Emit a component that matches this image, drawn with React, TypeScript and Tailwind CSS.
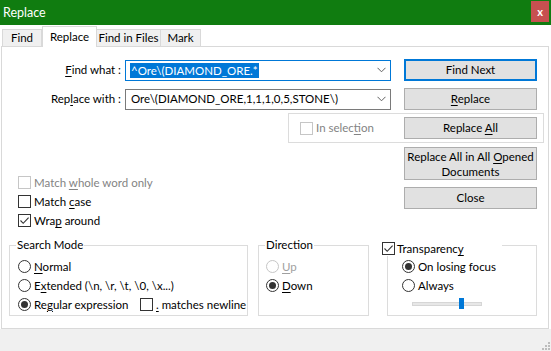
import type { ReactNode } from "react";

function U({ children }: { children: ReactNode }) {
  return <span className="underline decoration-1 underline-offset-[2px]">{children}</span>;
}

function Check({ checked = false, disabled = false }: { checked?: boolean; disabled?: boolean }) {
  return (
    <span
      className={`flex h-[13px] w-[13px] shrink-0 items-center justify-center border bg-white ${
        disabled ? "border-[#c6c6c6]" : "border-[#333333]"
      }`}
    >
      {checked && (
        <svg width="11" height="11" viewBox="0 0 11 11" aria-hidden="true">
          <path d="M1.5 5.5 4.2 8.3 9.6 2.6" fill="none" stroke="#333" strokeWidth="1.1" />
        </svg>
      )}
    </span>
  );
}

function Radio({ checked = false, disabled = false }: { checked?: boolean; disabled?: boolean }) {
  return (
    <span
      className={`flex h-[13px] w-[13px] shrink-0 items-center justify-center rounded-full border bg-white ${
        disabled ? "border-[#c6c6c6]" : "border-[#333333]"
      }`}
    >
      {checked && <span className="h-[7px] w-[7px] rounded-full bg-[#333333]" />}
    </span>
  );
}

function Chevron() {
  return (
    <svg width="9" height="6" viewBox="0 0 9 6" aria-hidden="true" className="ml-auto mr-[4px] shrink-0">
      <path d="M0.5 0.8 4.5 4.8 8.5 0.8" fill="none" stroke="#606060" strokeWidth="1" />
    </svg>
  );
}

function Button({ children, primary = false, className = "" }: { children: ReactNode; primary?: boolean; className?: string }) {
  return (
    <div
      className={`flex w-[133px] items-center justify-center bg-[#e1e1e1] text-center ${
        primary ? "border-2 border-[#0078d7]" : "border border-[#adadad]"
      } ${className}`}
    >
      {children}
    </div>
  );
}

function GroupBox({ label, children, className = "" }: { label: ReactNode; children: ReactNode; className?: string }) {
  return (
    <div className={`relative h-[71px] border border-[#dcdcdc] pt-[11px] ${className}`}>
      {label}
      {children}
    </div>
  );
}

function Legend({ children }: { children: ReactNode }) {
  return <span className="absolute left-[6px] top-[-9px] bg-white px-[1px]">{children}</span>;
}

function Option({ children, control, className = "" }: { children: ReactNode; control: ReactNode; className?: string }) {
  return (
    <div className={`flex h-[19px] items-center gap-[3px] ${className}`}>
      {control}
      <span>{children}</span>
    </div>
  );
}

export default function App() {
  return (
    <div className="flex h-[351px] w-[551px] flex-col overflow-hidden whitespace-nowrap bg-white font-['Lato',sans-serif] text-[11.5px] leading-[16px] text-black">
      <div className="flex h-[25px] shrink-0 items-start justify-between bg-[#107c10] pl-[3px] pr-[2px]">
        <span className="mt-[4px] text-[12.5px] leading-[17px] text-white">Replace</span>
        <span className="mt-[1px] flex h-[21px] w-[18px] items-center justify-center bg-[#c75050] text-[11px] font-bold leading-none text-white">
          x
        </span>
      </div>

      <div className="flex h-[21px] shrink-0 items-end pl-[2px]">
        <div className="flex h-[17px] w-[40px] items-center justify-center border border-b-0 border-[#d9d9d9] bg-[#f0f0f0]">Find</div>
        <div className="relative z-10 -mb-px flex h-[21px] w-[55px] items-start justify-center border border-b-0 border-[#d9d9d9] bg-white pt-[2px]">
          Replace
        </div>
        <div className="flex h-[17px] w-[64px] items-center justify-center border border-b-0 border-l-0 border-[#d9d9d9] bg-[#f0f0f0]">
          Find in Files
        </div>
        <div className="flex h-[17px] w-[40px] items-center justify-center border border-b-0 border-l-0 border-[#d9d9d9] bg-[#f0f0f0]">
          Mark
        </div>
      </div>

      <div className="ml-px flex h-[283px] w-[548px] shrink-0 flex-col border border-[#d9d9d9]">
        <div className="mt-[12px] flex h-[22px] items-center">
          <span className="w-[119px] text-right">
            <U>F</U>ind what :
          </span>
          <div className="ml-[4px] flex h-[21px] w-[266px] items-center border border-[#0078d7] pl-[4px]">
            <span className="bg-[#0078d7] px-px leading-[15px] text-white">^Ore\(DIAMOND_ORE.*</span>
            <Chevron />
          </div>
          <Button primary className="ml-[13px] h-[22px]">
            Find Next
          </Button>
        </div>

        <div className="mt-[7px] flex h-[22px] items-center">
          <span className="w-[119px] text-right">
            Rep<U>l</U>ace with :
          </span>
          <div className="ml-[4px] flex h-[21px] w-[266px] items-center border border-[#7a7a7a] pl-[5px]">
            <span>Ore\(DIAMOND_ORE,1,1,1,0,5,STONE\)</span>
            <Chevron />
          </div>
          <Button className="ml-[13px] h-[22px]">
            <span>
              <U>R</U>eplace
            </span>
          </Button>
        </div>

        <div className="ml-[286px] mt-[3px] flex h-[30px] w-[256px] items-center border border-[#dcdcdc] pl-[11px]">
          <Check disabled />
          <span className="ml-[3px] text-[#838383]">
            In selec<U>t</U>ion
          </span>
          <Button className="ml-auto mr-[6px] h-[22px]">
            <span>
              Replace <U>A</U>ll
            </span>
          </Button>
        </div>

        <div className="flex h-[102px] justify-between">
          <div className="pl-[16px] pt-[30px]">
            <Option control={<Check disabled />}>
              <span className="text-[#838383]">
                Match <U>w</U>hole word only
              </span>
            </Option>
            <Option control={<Check />}>
              Match <U>c</U>ase
            </Option>
            <Option control={<Check checked />}>
              Wra<U>p</U> around
            </Option>
          </div>
          <div className="mr-[11px] flex flex-col pt-[4px]">
            <Button className="h-[33px] leading-[15px]">
              <span>
                Replace All in All <U>O</U>pened
                <br />
                Documents
              </span>
            </Button>
            <Button className="mt-[7px] h-[22px]">Close</Button>
          </div>
        </div>

        <div className="flex pl-[7px]">
          <GroupBox className="w-[239px] pl-[8px]" label={<Legend>Search Mode</Legend>}>
            <Option control={<Radio />}>
              <U>N</U>ormal
            </Option>
            <Option control={<Radio />}>
              E<U>x</U>tended (\n, \r, \t, \0, \x...)
            </Option>
            <div className="flex items-center">
              <Option className="w-[122px]" control={<Radio checked />}>
                Re<U>g</U>ular expression
              </Option>
              <Option control={<Check />}>
                <U>.</U> matches newline
              </Option>
            </div>
          </GroupBox>

          <GroupBox className="ml-[10px] w-[111px] pl-[7px]" label={<Legend>Direction</Legend>}>
            <Option control={<Radio disabled />}>
              <span className="text-[#a0a0a0]">
                <U>U</U>p
              </span>
            </Option>
            <Option control={<Radio checked />}>
              <U>D</U>own
            </Option>
          </GroupBox>

          <GroupBox
            className="ml-[18px] w-[150px] pl-[14px]"
            label={
              <span className="absolute left-[-6px] top-[-5px] flex h-[15px] w-[120px] items-center gap-[2px] bg-white">
                <Check checked />
                <span>
                  Transparenc<U>y</U>
                </span>
              </span>
            }
          >
            <Option control={<Radio checked />}>On losing focus</Option>
            <Option control={<Radio />}>Always</Option>
            <div className="relative ml-[10px] mt-[3px] flex h-[11px] w-[70px] items-center">
              <div className="h-[4px] w-full border border-[#d6d6d6] bg-[#e7e7e7]" />
              <div className="absolute left-[47px] top-0 h-[11px] w-[5px] bg-[#0078d7]" />
            </div>
          </GroupBox>
        </div>
      </div>

      <div className="flex flex-1 items-end justify-end bg-[#f0f0f0] pb-px pr-px">
        <svg width="10" height="10" viewBox="0 0 10 10" aria-hidden="true">
          <rect x="8" y="2" width="2" height="2" fill="#bcbcbc" />
          <rect x="5" y="5" width="2" height="2" fill="#bcbcbc" />
          <rect x="8" y="5" width="2" height="2" fill="#bcbcbc" />
          <rect x="2" y="8" width="2" height="2" fill="#bcbcbc" />
          <rect x="5" y="8" width="2" height="2" fill="#bcbcbc" />
          <rect x="8" y="8" width="2" height="2" fill="#bcbcbc" />
        </svg>
      </div>
    </div>
  );
}
